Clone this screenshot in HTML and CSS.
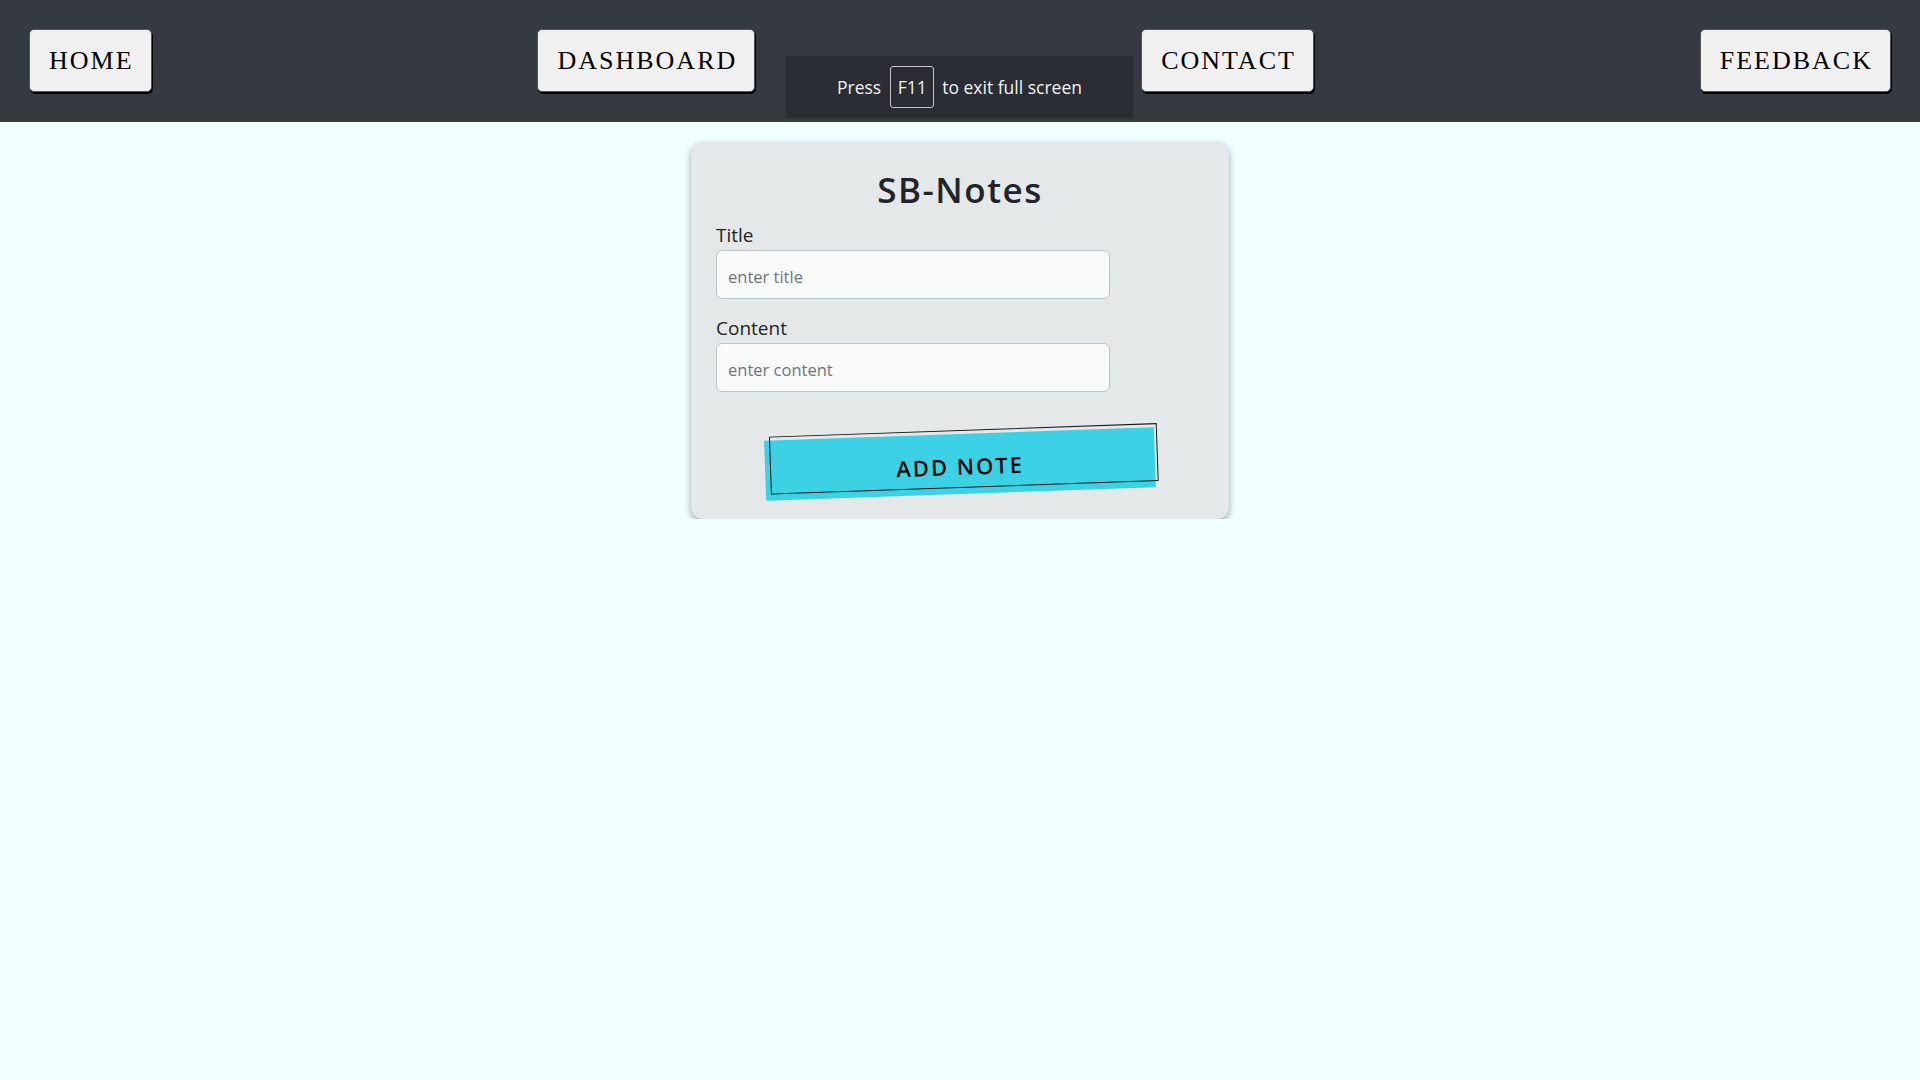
FILE: index.html
```html
<!DOCTYPE html>
<html lang="en">
<head>
<meta charset="utf-8">
<title>SB-Notes</title>
<link rel="stylesheet" href="styles.css">
</head>
<body>
<nav class="navbar">
  <button class="nav-btn">Home</button>
  <button class="nav-btn">Dashboard</button>
  <button class="nav-btn">Contact</button>
  <button class="nav-btn">Feedback</button>
  <div class="fs-notice">Press <span class="key">F11</span> to exit full screen</div>
</nav>
<main class="page">
  <section class="card">
    <h1 class="card-title">SB-Notes</h1>
    <form class="note-form">
      <label class="field-label" for="title">Title</label>
      <input class="field-input" id="title" type="text" placeholder="enter title">
      <label class="field-label second" for="content">Content</label>
      <input class="field-input" id="content" type="text" placeholder="enter content">
      <div class="btn-row">
        <button type="button" class="add-btn"><span class="add-text">Add Note</span></button>
      </div>
    </form>
  </section>
</main>
</body>
</html>
```
FILE: styles.css
```css
html, body {
  margin: 0;
  padding: 0;
}
body {
  background: #f0ffff;
  font-family: "Open Sans", "Noto Sans", sans-serif;
  color: #212529;
}
.navbar {
  position: relative;
  box-sizing: border-box;
  height: 122px;
  background: #343a40;
  display: flex;
  justify-content: space-between;
  align-items: flex-start;
  padding: 29px 29px 0 29px;
}
.nav-btn {
  box-sizing: border-box;
  height: 63px;
  padding: 0 17px 0 19px;
  background: #f0f0f0;
  border: 1px solid #555;
  border-radius: 5px;
  box-shadow: 1px 2px 0 #000;
  font-family: "Liberation Serif", "Times New Roman", serif;
  font-size: 26px;
  letter-spacing: 2px;
  text-transform: uppercase;
  color: #000;
  cursor: pointer;
}
.fs-notice {
  position: absolute;
  left: 786px;
  top: 56px;
  width: 347px;
  height: 62px;
  background: #2a2d33;
  color: #f2f2f2;
  font-family: "Open Sans", "Noto Sans", sans-serif;
  font-size: 17.5px;
  display: flex;
  align-items: center;
  justify-content: center;
}
.key {
  display: inline-flex;
  align-items: center;
  justify-content: center;
  box-sizing: border-box;
  width: 44px;
  height: 42px;
  margin: 0 8px 0 9px;
  border: 1px solid #c4c4c4;
  border-radius: 3px;
}
.page {
  display: flex;
  justify-content: center;
  padding-top: 20px;
}
.card {
  box-sizing: border-box;
  width: 538px;
  height: 377px;
  background: #e5e8e9;
  border-radius: 12px;
  box-shadow: 0 3px 7px rgba(0, 0, 0, 0.35);
  padding: 25px 25px 25px 25px;
}
.card-title {
  margin: 0;
  text-align: center;
  font-size: 35px;
  line-height: 46px;
  font-weight: 600;
  letter-spacing: 1.5px;
  color: #212529;
}
.note-form {
  display: flex;
  flex-direction: column;
  align-items: flex-start;
  margin-top: 10px;
}
.field-label {
  font-size: 19px;
  line-height: 24px;
  color: #212529;
  margin-bottom: 3px;
}
.field-label.second {
  margin-top: 17px;
}
.field-input {
  box-sizing: border-box;
  width: 394px;
  height: 49px;
  padding: 3px 11px 0 11px;
  background: #f9fafa;
  border: 1px solid #bcc3ca;
  border-radius: 6px;
  font-family: "Open Sans", "Noto Sans", sans-serif;
  font-size: 16.5px;
  color: #212529;
  outline: none;
}
.field-input::placeholder {
  color: #6c757d;
}
.btn-row {
  align-self: stretch;
  display: flex;
  justify-content: center;
  margin-top: 42px;
}
.add-btn {
  position: relative;
  width: 390px;
  height: 60px;
  background: #3dd1e6;
  border: none;
  padding: 0;
  transform: rotate(-2deg);
  cursor: pointer;
  font-family: "Open Sans", "Noto Sans", sans-serif;
  font-size: 22px;
  font-weight: 600;
  letter-spacing: 2px;
  text-transform: uppercase;
  color: #0a0a0a;
}
.add-btn::after {
  content: "";
  position: absolute;
  left: 5px;
  top: -4px;
  width: 388px;
  height: 58px;
  box-sizing: border-box;
  border: 1px solid #1a1a1a;
}
.add-text {
  position: relative;
  top: 2px;
}
```
